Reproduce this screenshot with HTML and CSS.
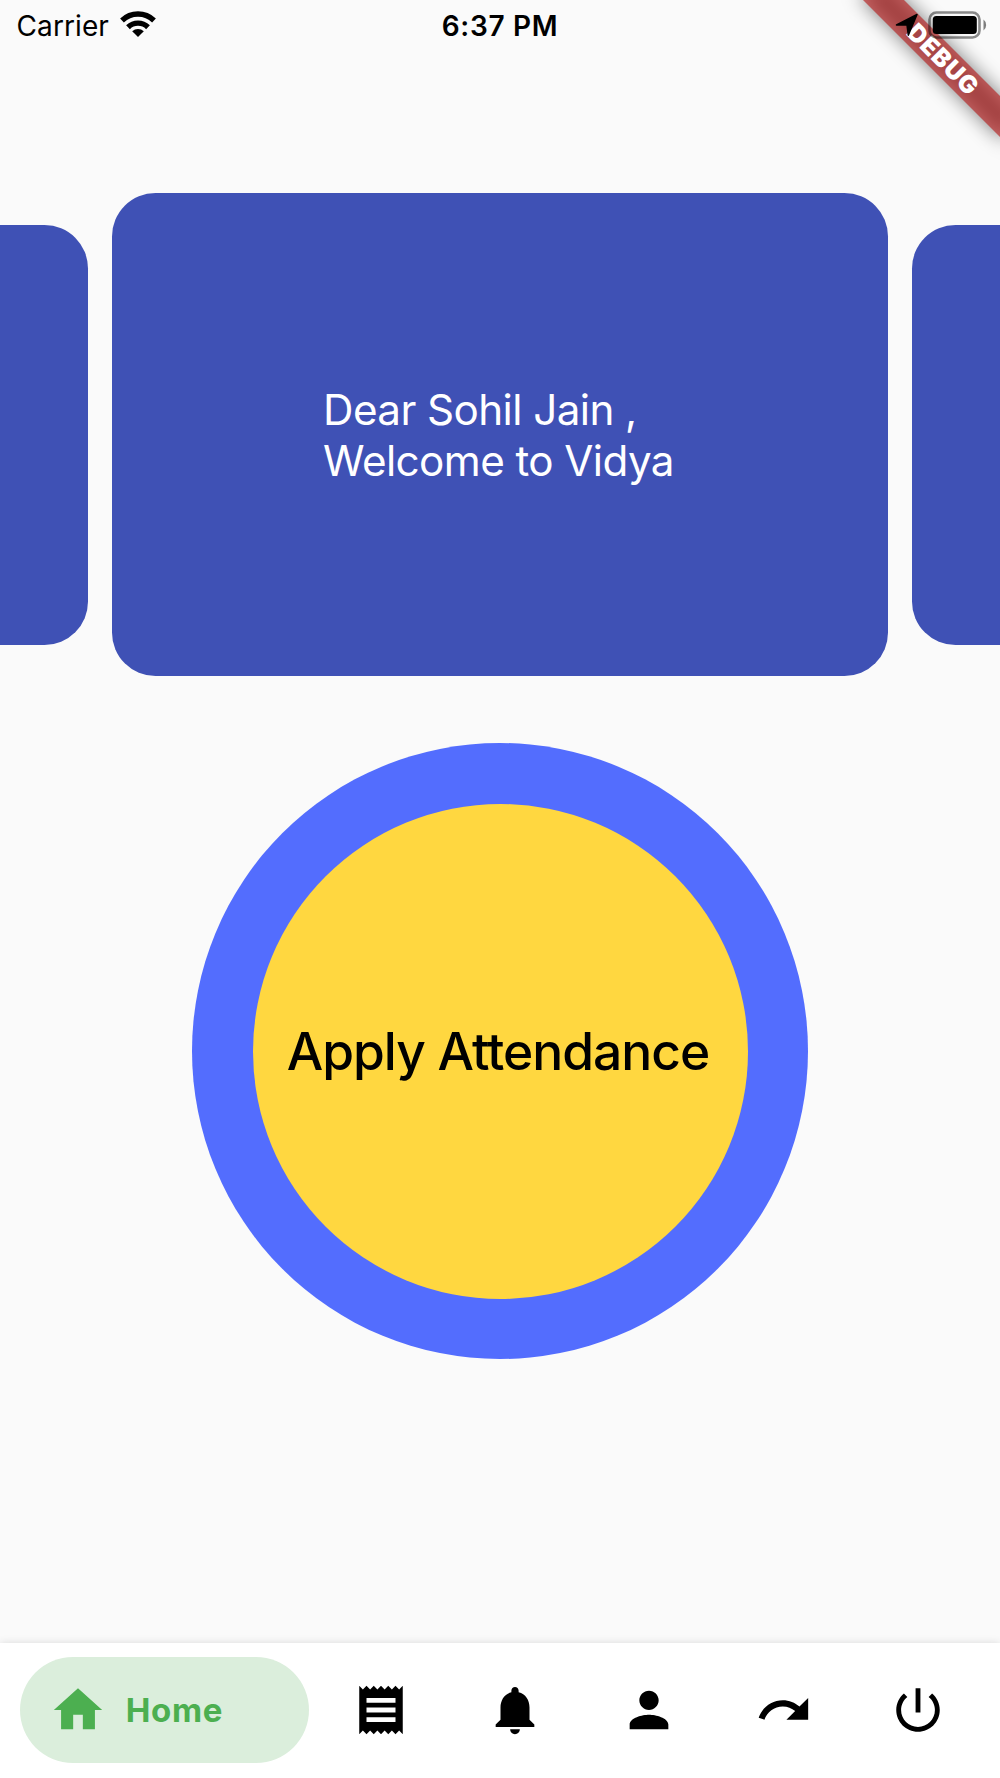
FILE: index.html
```html
<!DOCTYPE html>
<html lang="en">
<head>
<meta charset="utf-8">
<title>Vidya</title>
<link rel="stylesheet" href="styles.css">
</head>
<body>
<div class="app">
  <div class="debug-corner">
    <div class="debug-shadow"></div>
    <div class="debug-banner"><span>DEBUG</span></div>
  </div>
  <header class="status">
    <div class="status-left">
      <span class="carrier">Carrier</span>
      <svg class="wifi" viewBox="0 0 38 28" aria-hidden="true">
        <path d="M3 10.500A23 23 0 0 1 35 10.500M9 17.200A14.300 14.300 0 0 1 29 17.200" fill="none" stroke="#000" stroke-width="5.400"/>
        <path d="M13.200 21.300A8.300 8.300 0 0 1 24.800 21.300L19 27z"/>
      </svg>
    </div>
    <span class="time">6:37 PM</span>
    <div class="status-right">
      <svg class="location" viewBox="0 0 24 24" aria-hidden="true"><path d="M22 1.500L13.300 22.200L12 12H1.500z" stroke="#000" stroke-width="1.500" stroke-linejoin="round"/></svg>
      <svg class="battery" viewBox="0 0 60 28" aria-hidden="true">
        <rect x="1.500" y="1.500" width="50" height="25" rx="7" fill="none" stroke="#000" stroke-opacity=".45" stroke-width="2.600"/>
        <rect x="4.800" y="5" width="44" height="18" rx="3.500"/>
        <path d="M55.500 8.500a7 7 0 0 1 0 11z" fill-opacity=".5"/>
      </svg>
    </div>
  </header>
  <main class="content">
    <section class="carousel">
      <div class="card side"></div>
      <div class="card"><p class="welcome">Dear Sohil Jain ,<br>Welcome to Vidya</p></div>
      <div class="card side"></div>
    </section>
    <button class="attendance"><span class="attendance-face">Apply Attendance</span></button>
  </main>
  <nav class="tabs">
    <a class="tab active"><svg class="icon" viewBox="0 0 24 24"><path d="M10 20v-6h4v6h5v-8h3L12 3 2 12h3v8z"/></svg><span class="tab-label">Home</span></a>
    <a class="tab"><svg class="icon" viewBox="0 0 24 24"><path d="M18 17H6v-2h12v2zm0-4H6v-2h12v2zm0-4H6V7h12v2zM3 22l1.500-1.500L6 22l1.500-1.500L9 22l1.500-1.500L12 22l1.500-1.500L15 22l1.500-1.500L18 22l1.500-1.500L21 22V2l-1.500 1.500L18 2l-1.500 1.500L15 2l-1.500 1.500L12 2l-1.500 1.500L9 2 7.500 3.500 6 2 4.500 3.500 3 2v20z"/></svg></a>
    <a class="tab"><svg class="icon" viewBox="0 0 24 24"><path d="M12 22c1.100 0 2-.9 2-2h-4c0 1.100.89 2 2 2zm6-6v-5c0-3.070-1.640-5.640-4.500-6.320V4c0-.83-.67-1.500-1.500-1.500s-1.500.67-1.500 1.500v.68C7.630 5.360 6 7.920 6 11v5l-2 2v1h16v-1l-2-2z"/></svg></a>
    <a class="tab"><svg class="icon" viewBox="0 0 24 24"><path d="M12 12c2.210 0 4-1.790 4-4s-1.790-4-4-4-4 1.790-4 4 1.790 4 4 4zm0 2c-2.670 0-8 1.340-8 4v2h16v-2c0-2.660-5.330-4-8-4z"/></svg></a>
    <a class="tab"><svg class="icon" viewBox="0 0 24 24"><path d="M18.400 10.600C16.550 8.990 14.150 8 11.500 8c-4.650 0-8.580 3.030-9.960 7.220L3.900 16c1.050-3.190 4.050-5.500 7.600-5.500 1.950 0 3.730.72 5.120 1.880L13 16h9V7l-3.600 3.600z"/></svg></a>
    <a class="tab"><svg class="icon" viewBox="0 0 24 24"><path d="M13 3h-2v10h2V3zm4.830 2.170l-1.420 1.420C17.990 7.860 19 9.810 19 12c0 3.870-3.130 7-7 7s-7-3.130-7-7c0-2.190 1.010-4.140 2.580-5.420L6.170 5.170C4.230 6.820 3 9.260 3 12c0 4.970 4.030 9 9 9s9-4.030 9-9c0-2.740-1.230-5.180-3.170-6.830z"/></svg></a>
  </nav>
</div>
</body>
</html>
```
FILE: styles.css
```css
* { box-sizing: border-box; }
body { margin: 0; font-family: Inter, "Liberation Sans", sans-serif; color: #000; }
.app {
  position: relative;
  display: flex;
  flex-direction: column;
  width: 1000px;
  height: 1778px;
  overflow: hidden;
  background: #fafafa;
}

.debug-corner {
  position: absolute;
  top: 0;
  right: 0;
  width: 200px;
  height: 200px;
  overflow: hidden;
}
.debug-shadow, .debug-banner {
  position: absolute;
  left: 42px;
  top: 43.500px;
  width: 200px;
  height: 29px;
  transform: rotate(45deg);
}
.debug-shadow { background: rgba(0, 0, 0, .5); filter: blur(9.500px); }
.debug-banner {
  display: flex;
  align-items: center;
  justify-content: center;
  padding-left: 3px;
  background: rgba(183, 28, 28, .63);
  color: #fff;
  font-size: 24.600px;
  font-weight: 900;
  letter-spacing: .8px;
  line-height: 1;
}

.status {
  position: relative;
  display: grid;
  grid-template-columns: 1fr auto 1fr;
  align-items: center;
  height: 46px;
  padding: 0 12px;
  line-height: 46px;
}
.status-left { display: flex; align-items: center; gap: 10px; padding-left: 4.500px; }
.carrier { font-size: 28px; letter-spacing: .1px; padding-top: 3px; }
.wifi { width: 38px; height: 28px; margin-top: -2px; }
.time { font-size: 28px; font-weight: 600; letter-spacing: .7px; padding-top: 3px; }
.status-right { display: flex; align-items: center; justify-content: flex-end; gap: 9px; }
.location { width: 24px; height: 24px; }
.battery { width: 60px; height: 28px; margin-top: 1px; }

.content {
  flex: 1;
  display: flex;
  flex-direction: column;
  align-items: center;
  padding-top: 147px;
}
.carousel { display: flex; align-items: center; gap: 24px; }
.card {
  display: flex;
  align-items: center;
  justify-content: center;
  flex: none;
  width: 776px;
  height: 483px;
  border-radius: 43.500px;
  background: #3f51b5;
}
.side { height: 420px; }
.welcome {
  margin: 0;
  padding: 1px 3px 0 0;
  color: #fff;
  font-size: 42.200px;
  letter-spacing: -.580px;
  line-height: 51px;
  white-space: nowrap;
}
.attendance {
  display: flex;
  align-items: center;
  justify-content: center;
  width: 616px;
  height: 616px;
  margin-top: 67px;
  padding: 0;
  border: 0;
  border-radius: 50%;
  background: #536dfe;
  color: #000;
  font: 500 51.500px/1 Inter, "Liberation Sans", sans-serif;
  letter-spacing: -1px;
  white-space: nowrap;
}
.attendance-face {
  display: flex;
  align-items: center;
  justify-content: center;
  width: 495px;
  height: 495px;
  padding: 2px 4px 0 0;
  border-radius: 50%;
  background: #ffd740;
}

.tabs {
  position: relative;
  display: flex;
  align-items: center;
  height: 135px;
  padding: 0 0 2px 19.500px;
  background: #fff;
  box-shadow: 0 0 8px rgba(0, 0, 0, .13);
}
.tab { display: flex; align-items: center; justify-content: center; flex: none; width: 134.200px; }
.icon { display: block; flex: none; width: 58px; height: 58px; }
.active {
  justify-content: flex-start;
  width: 289.500px;
  height: 106px;
  margin-right: 5px;
  padding-left: 29.200px;
  gap: 19px;
  border-radius: 53px;
  background: #dbeedc;
  color: #4caf50;
}
.active .icon { fill: #4caf50; }
.tab-label { font-size: 33px; font-weight: 700; letter-spacing: .7px; }
```
